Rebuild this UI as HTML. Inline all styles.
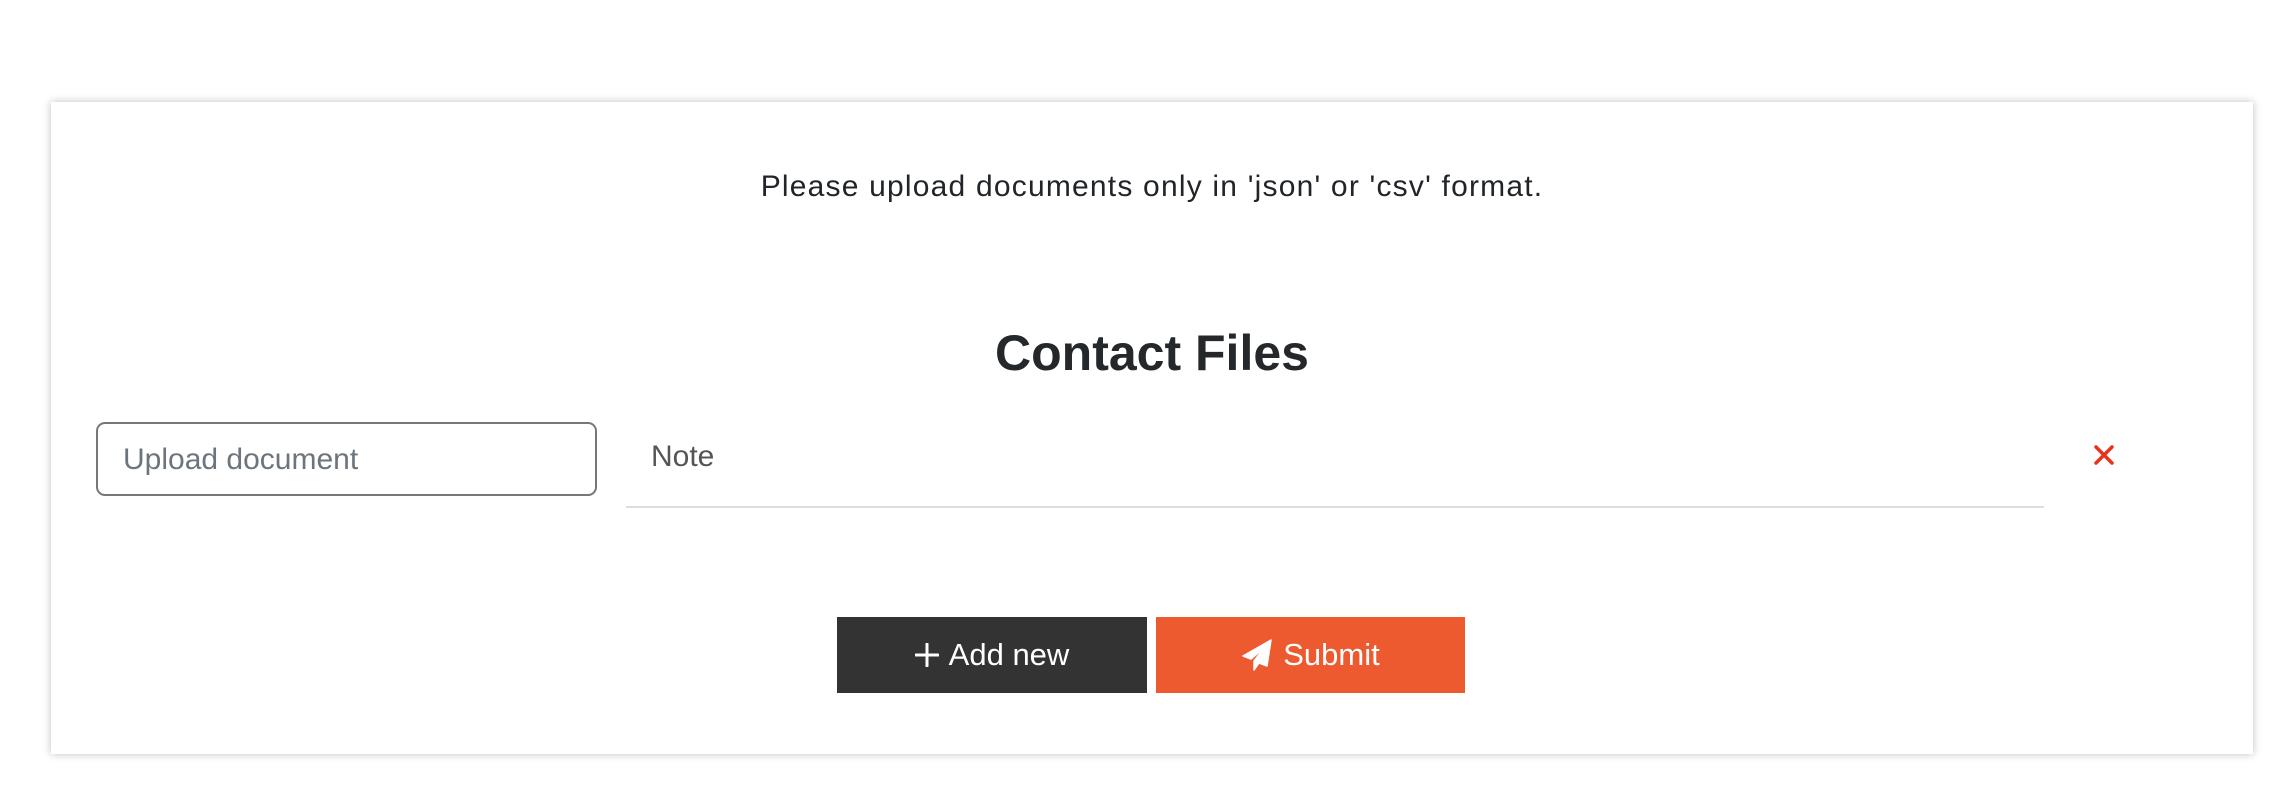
<!DOCTYPE html>
<html><head><meta charset="utf-8"><style>
*{box-sizing:border-box;margin:0;padding:0}
body{width:2288px;height:808px;background:#fff;font-family:"Liberation Sans",Arial,sans-serif;color:#212529;position:relative;overflow:hidden}
.card{position:absolute;left:51px;top:102px;width:2202px;height:652px;background:#fff;box-shadow:0 0 8px rgba(0,0,0,.25)}
.abs{position:absolute}
.info{left:51px;width:2202px;top:170px;text-align:center;font-size:30px;line-height:34px;letter-spacing:1.2px}
.h{left:51px;width:2202px;top:322px;text-align:center;font-size:50px;line-height:62px;font-weight:bold;color:#25282b}
.inp{left:96px;top:422px;width:501px;height:74px;border:2px solid #777;border-radius:9px;font-size:30px;color:#6c757d;padding-left:25px;line-height:72px}
.note{left:651px;top:439px;font-size:30px;color:#555;line-height:36px}
.line{left:626px;top:506px;width:1418px;height:2px;background:#ddd}
.btn{top:617px;height:76px;color:#fff;font-size:31px;display:flex;align-items:center;justify-content:center;gap:10px}
</style></head><body>
<div class="card"></div>
<div class="abs info">Please upload documents only in 'json' or 'csv' format.</div>
<div class="abs h">Contact Files</div>
<div class="abs inp">Upload document</div>
<div class="abs note">Note</div>
<div class="abs line"></div>
<svg class="abs" style="left:2094px;top:445px" width="20" height="20" viewBox="0 0 20 20"><path d="M2 2L18 18M18 2L2 18" stroke="#e8321f" stroke-width="3.5" stroke-linecap="round"/></svg>
<div class="abs btn" style="left:837px;width:310px;background:#333"><svg width="24" height="24" viewBox="0 0 24 24"><path d="M12 1V23M1 12H23" stroke="#fff" stroke-width="3" stroke-linecap="round"/></svg>Add new</div>
<div class="abs btn" style="left:1156px;width:309px;background:#ee5a2f"><svg width="32" height="32" viewBox="0 0 32 32"><path d="M30 1L2 17l8 3 14-12-11 14v9l5-7 8 3z" fill="#fff" stroke="#fff" stroke-width="1.5" stroke-linejoin="round"/></svg>Submit</div>
</body></html>
